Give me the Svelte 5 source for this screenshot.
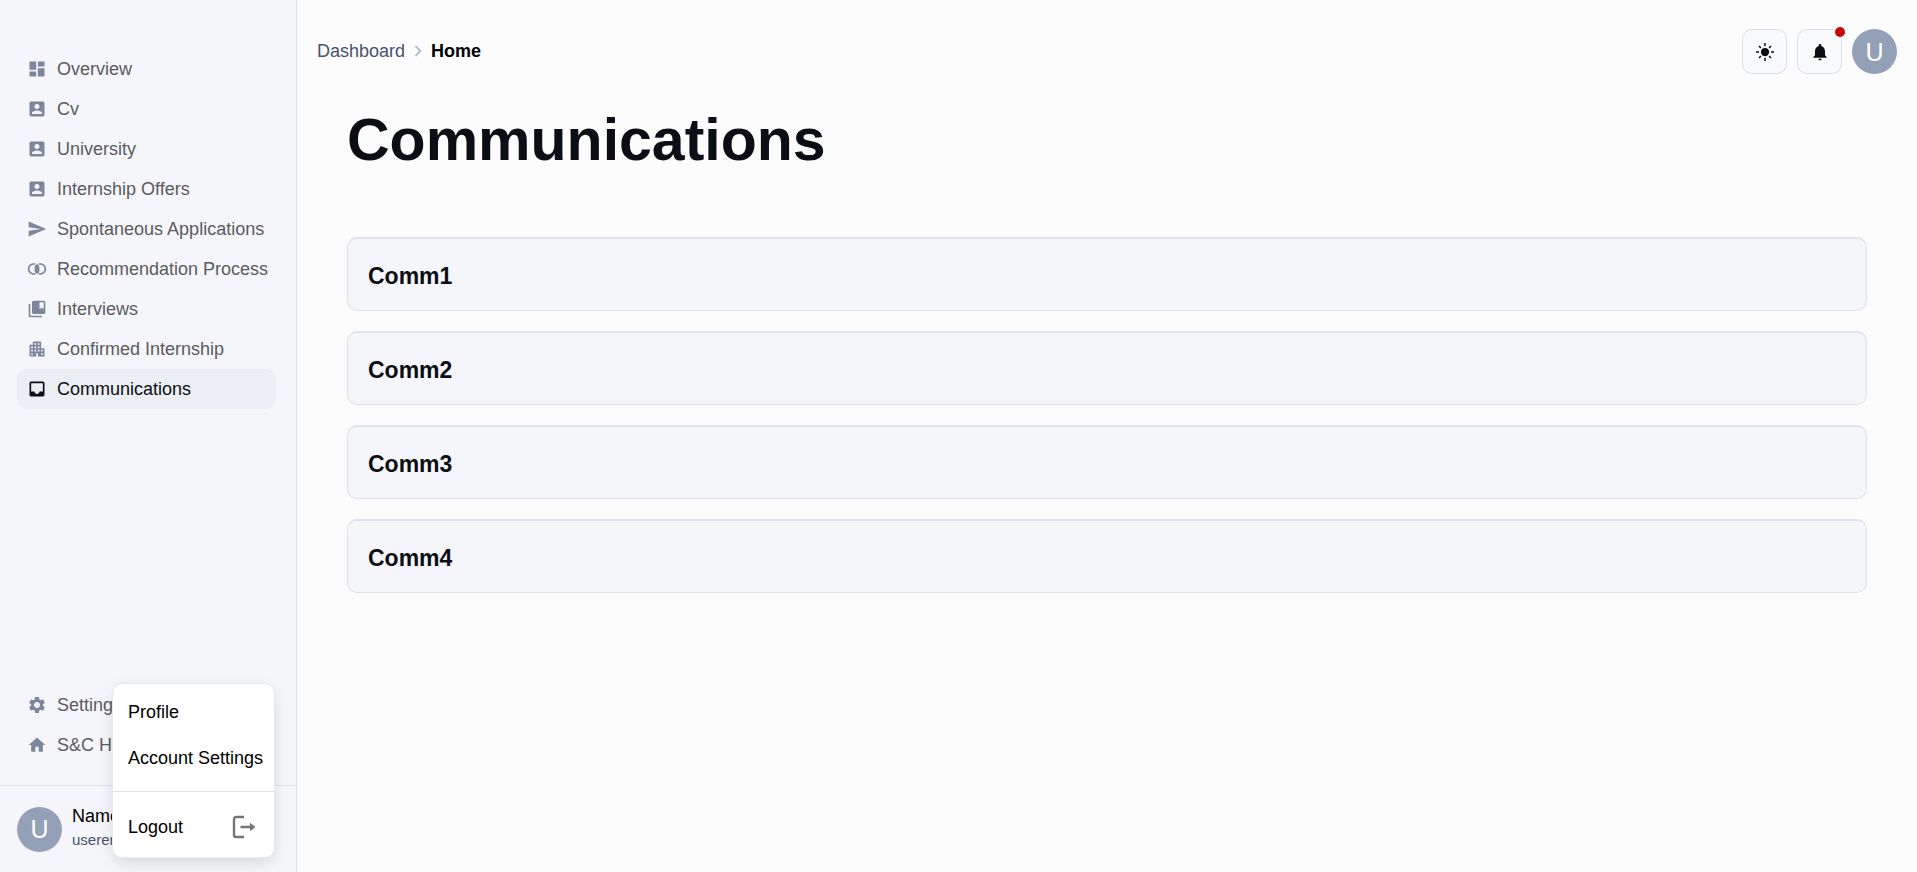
<script>
  const icons = {
    dashboard: 'M3 13h8V3H3v10zm0 8h8v-6H3v6zm10 0h8V11h-8v10zm0-18v6h8V3h-8z',
    account: 'M3 5v14c0 1.1.89 2 2 2h14c1.1 0 2-.9 2-2V5c0-1.1-.9-2-2-2H5c-1.11 0-2 .9-2 2zm12 4c0 1.66-1.34 3-3 3s-3-1.34-3-3 1.34-3 3-3 3 1.34 3 3zm-9 8c0-2 4-3.1 6-3.1s6 1.1 6 3.1v1H6v-1z',
    send: 'M2.01 21 23 12 2.01 3 2 10l15 2-15 2z',
    join: 'M9 12a3 5.74 0 1 0 6 0a3 5.74 0 1 0-6 0zM9.04 16.87c-.33.08-.68.13-1.04.13-2.76 0-5-2.24-5-5s2.24-5 5-5c.36 0 .71.05 1.04.13.39-.56.88-1.12 1.49-1.63C9.75 5.19 8.9 5 8 5c-3.86 0-7 3.14-7 7s3.14 7 7 7c.9 0 1.75-.19 2.53-.5-.61-.51-1.1-1.07-1.49-1.63zM16 5c-.9 0-1.75.19-2.53.5.61.51 1.1 1.07 1.49 1.63.33-.08.68-.13 1.04-.13 2.76 0 5 2.24 5 5s-2.24 5-5 5c-.36 0-.71-.05-1.04-.13-.39.56-.88 1.12-1.49 1.63.78.31 1.63.5 2.53.5 3.86 0 7-3.14 7-7s-3.14-7-7-7z',
    bookmark: 'M4 6H2v14c0 1.1.9 2 2 2h14v-2H4V6zM20 2H8c-1.1 0-2 .9-2 2v12c0 1.1.9 2 2 2h12c1.1 0 2-.9 2-2V4c0-1.1-.9-2-2-2zm0 10-2.5-1.5L15 12V4h5v8z',
    apartment: 'M17 11V3H7v4H3v14h8v-4h2v4h8V11h-4zM7 19H5v-2h2v2zm0-4H5v-2h2v2zm0-4H5V9h2v2zm4 4H9v-2h2v2zm0-4H9V9h2v2zm0-4H9V5h2v2zm4 8h-2v-2h2v2zm0-4h-2V9h2v2zm0-4h-2V5h2v2zm4 12h-2v-2h2v2zm0-4h-2v-2h2v2z',
    inbox: 'M19 3H4.99c-1.11 0-1.98.89-1.98 2L3 19c0 1.1.88 2 1.99 2H19c1.1 0 2-.9 2-2V5c0-1.11-.9-2-2-2zm0 12h-4c0 1.66-1.35 3-3 3s-3-1.34-3-3H4.99V5H19v10z',
    settings: 'M19.14 12.94c.04-.3.06-.61.06-.94 0-.32-.02-.64-.07-.94l2.03-1.58c.18-.14.23-.41.12-.61l-1.92-3.32c-.12-.22-.37-.29-.59-.22l-2.39.96c-.5-.38-1.03-.7-1.62-.94l-.36-2.54c-.04-.24-.24-.41-.48-.41h-3.84c-.24 0-.43.17-.47.41l-.36 2.54c-.59.24-1.13.57-1.62.94l-2.39-.96c-.22-.08-.47 0-.59.22L2.74 8.87c-.12.21-.08.47.12.61l2.03 1.58c-.05.3-.09.63-.09.94s.02.64.07.94l-2.03 1.58c-.18.14-.23.41-.12.61l1.92 3.32c.12.22.37.29.59.22l2.39-.96c.5.38 1.03.7 1.62.94l.36 2.54c.05.24.24.41.48.41h3.84c.24 0 .44-.17.47-.41l.36-2.54c.59-.24 1.13-.56 1.62-.94l2.39.96c.22.08.47 0 .59-.22l1.92-3.32c.12-.22.07-.47-.12-.61l-2.01-1.58zM12 15.6c-1.98 0-3.6-1.62-3.6-3.6s1.62-3.6 3.6-3.6 3.6 1.62 3.6 3.6-1.62 3.6-3.6 3.6z',
    home: 'M10 20v-6h4v6h5v-8h3L12 3 2 12h3v8z',
    bell: 'M12 22c1.1 0 2-.9 2-2h-4c0 1.1.89 2 2 2zm6-6v-5c0-3.07-1.64-5.64-4.5-6.32V4c0-.83-.67-1.5-1.5-1.5s-1.5.67-1.5 1.5v.68C7.63 5.36 6 7.92 6 11v5l-2 2v1h16v-1l-2-2z',
    chevron: 'M10 6 8.59 7.41 13.17 12l-4.58 4.59L10 18l6-6z'
  };

  const mainLinks = [
    ['Overview', 'dashboard'],
    ['Cv', 'account'],
    ['University', 'account'],
    ['Internship Offers', 'account'],
    ['Spontaneous Applications', 'send'],
    ['Recommendation Process', 'join'],
    ['Interviews', 'bookmark'],
    ['Confirmed Internship', 'apartment'],
    ['Communications', 'inbox']
  ];
  const secondaryLinks = [
    ['Settings', 'settings'],
    ['S&C Home', 'home']
  ];
  const communications = ['Comm1', 'Comm2', 'Comm3', 'Comm4'];
  let current = $state('Communications');
</script>

{#snippet icon(name)}
  <svg class="icon" viewBox="0 0 24 24" aria-hidden="true"><path d={icons[name]} /></svg>
{/snippet}

{#snippet links(items)}
  <ul>
    {#each items as [label, glyph]}
      <li>
        <a
          href="#top"
          class:active={current === label}
          aria-current={current === label ? 'page' : undefined}
          onclick={() => (current = label)}
        >
          {@render icon(glyph)}<span>{label}</span>
        </a>
      </li>
    {/each}
  </ul>
{/snippet}

<div class="layout">
  <aside>
    <nav>
      {@render links(mainLinks)}
      {@render links(secondaryLinks)}
    </nav>
    <div class="user">
      <span class="avatar">U</span>
      <div class="identity">
        <span class="name">Name</span>
        <span class="email">useremail</span>
      </div>
      <div class="menu" role="menu">
        <button role="menuitem">Profile</button>
        <button role="menuitem">Account Settings</button>
        <hr />
        <button role="menuitem" class="logout">
          Logout
          <svg viewBox="0 0 24 24" aria-hidden="true">
            <path d="M12 2H4a2 2 0 0 0-2 2v16a2 2 0 0 0 2 2h8M8.500 12H20" />
            <path class="tip" d="M18 7.800 23.500 12 18 16.200z" />
          </svg>
        </button>
      </div>
    </div>
  </aside>

  <main>
    <header>
      <nav class="breadcrumbs" aria-label="breadcrumb">
        <a href="#top">Dashboard</a>
        {@render icon('chevron')}
        <strong>Home</strong>
      </nav>
      <div class="actions">
        <button class="square" aria-label="Theme">
          <svg class="icon sun" viewBox="0 0 24 24" aria-hidden="true">
            <circle cx="12" cy="12" r="5.500" />
            <path class="rays" d="M12 0v4M12 20v4M0 12h4M20 12h4M4 4l2.500 2.500M17.500 17.500 20 20M20 4l-2.500 2.500M6.500 17.500 4 20" />
          </svg>
        </button>
        <button class="square" aria-label="Notifications">
          {@render icon('bell')}
          <span class="badge"></span>
        </button>
        <span class="avatar">U</span>
      </div>
    </header>

    <section>
      <h1>Communications</h1>
      <div class="cards">
        {#each communications as title}
          <h2><button aria-expanded="false">{title}</button></h2>
        {/each}
      </div>
    </section>
  </main>
</div>

<style>
  :global(body) {
    margin: 0;
    background: #fcfcfc;
  }
  * {
    box-sizing: border-box;
  }
  .layout {
    display: flex;
    min-height: 100vh;
    font-family: 'Liberation Sans', Arial, sans-serif;
    font-size: 18px;
    line-height: 24px;
    color: #0b0e14;
  }
  button {
    font: inherit;
    color: inherit;
    cursor: pointer;
  }
  a {
    text-decoration: none;
  }
  .icon {
    width: 20px;
    height: 20px;
    fill: currentColor;
    flex: none;
  }
  aside {
    display: flex;
    flex-direction: column;
    flex: none;
    width: 297px;
    background: #f5f6fa;
    border-right: 1px solid #dfe2ec;
  }
  aside nav {
    flex: 1;
    display: flex;
    flex-direction: column;
    justify-content: space-between;
    padding: 49px 20px 20px 17px;
  }
  ul {
    list-style: none;
    margin: 0;
    padding: 0;
  }
  li a {
    display: flex;
    align-items: center;
    gap: 10px;
    height: 40px;
    padding: 0 10px;
    border-radius: 10px;
    color: #5a5b5f;
    white-space: nowrap;
  }
  li .icon {
    color: #7c869c;
  }
  li a.active {
    background: #ebeef3;
  }
  li a.active,
  li a.active .icon {
    color: #0b0e14;
  }
  .user {
    position: relative;
    display: flex;
    align-items: center;
    gap: 10px;
    height: 87px;
    padding: 0 17px;
    border-top: 1px solid #dfe2ec;
  }
  .avatar {
    display: flex;
    align-items: center;
    justify-content: center;
    flex: none;
    width: 45px;
    height: 45px;
    border-radius: 50%;
    background: #94a0b8;
    color: #fff;
    font-size: 25px;
  }
  .identity {
    display: flex;
    flex-direction: column;
    padding-bottom: 2px;
  }
  .name {
    color: #000;
  }
  .email {
    font-size: 15px;
    color: #47536b;
  }
  .menu {
    position: absolute;
    left: 112px;
    bottom: 14px;
    display: flex;
    flex-direction: column;
    width: 163px;
    padding: 5px 5px 7px;
    background: #fff;
    border-radius: 10px;
    border: 1px solid #e6e8ee;
    box-shadow: 0 4px 16px rgba(11, 14, 20, 0.08), 0 8px 16px -5px rgba(11, 14, 20, 0.07);
  }
  .menu button {
    height: 46px;
    padding: 0 10px;
    border: 0;
    background: none;
    color: #000;
    text-align: left;
    white-space: nowrap;
  }
  .menu hr {
    margin: 10px -5px 12px;
    border: 0;
    border-top: 1px solid #dfe2e6;
  }
  .menu .logout {
    display: flex;
    align-items: center;
    justify-content: space-between;
    padding-right: 13px;
  }
  .logout svg {
    width: 24px;
    height: 24px;
    fill: none;
    stroke: #757575;
    stroke-width: 2.4;
  }
  .logout .tip {
    fill: #757575;
    stroke: none;
  }
  main {
    flex: 1;
    min-width: 0;
    padding: 29px 20px;
  }
  header {
    display: flex;
    align-items: center;
    justify-content: space-between;
  }
  .breadcrumbs {
    display: flex;
    align-items: center;
    gap: 2px;
    padding-bottom: 2px;
  }
  .breadcrumbs a {
    color: #47536b;
  }
  .breadcrumbs .icon {
    width: 22px;
    height: 22px;
    color: #b4b8c0;
  }
  .breadcrumbs strong {
    color: #000;
  }
  .actions {
    display: flex;
    gap: 10px;
  }
  .square {
    position: relative;
    display: flex;
    align-items: center;
    justify-content: center;
    width: 45px;
    height: 45px;
    padding: 0;
    border: 1px solid #dadee7;
    border-radius: 10px;
    background: #f9fafc;
  }
  .sun {
    width: 18px;
    height: 18px;
  }
  .rays {
    stroke: currentColor;
    stroke-width: 2;
  }
  .badge {
    position: absolute;
    top: -3px;
    right: -4px;
    width: 10px;
    height: 10px;
    border-radius: 50%;
    background: #c40a0a;
  }
  section {
    padding: 29px 30px;
  }
  h1 {
    margin: 0;
    font-size: 59px;
    line-height: 74px;
  }
  .cards {
    display: flex;
    flex-direction: column;
    gap: 20px;
    margin-top: 60px;
  }
  h2 {
    margin: 0;
    font-size: 23px;
    line-height: 28px;
  }
  h2 button {
    display: block;
    width: 100%;
    padding: 23px 20px 20px;
    border: 1px solid #dfe2ec;
    border-top-width: 2px;
    border-radius: 10px;
    background: #f5f6fa;
    text-align: left;
  }
</style>
